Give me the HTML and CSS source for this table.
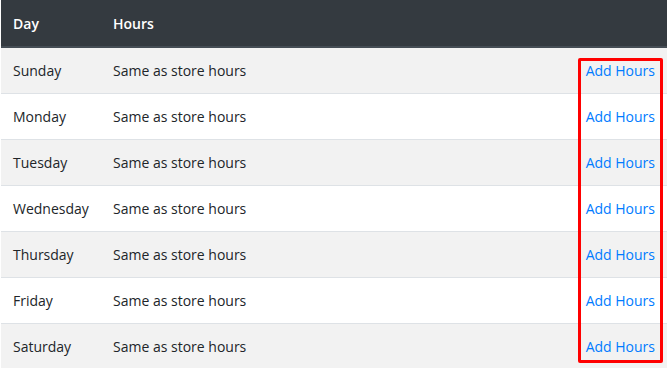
FILE: index.html
```html
<!DOCTYPE html>
<html>
<head>
<meta charset="utf-8">
<link rel="stylesheet" href="styles.css">
</head>
<body>
<div class="wrap">
<table class="hours">
  <thead>
    <tr><th class="c-day">Day</th><th class="c-hours">Hours</th><th class="c-act"></th></tr>
  </thead>
  <tbody>
    <tr><td>Sunday</td><td>Same as store hours</td><td class="act"><a href="#">Add Hours</a></td></tr>
    <tr><td>Monday</td><td>Same as store hours</td><td class="act"><a href="#">Add Hours</a></td></tr>
    <tr><td>Tuesday</td><td>Same as store hours</td><td class="act"><a href="#">Add Hours</a></td></tr>
    <tr><td>Wednesday</td><td>Same as store hours</td><td class="act"><a href="#">Add Hours</a></td></tr>
    <tr><td>Thursday</td><td>Same as store hours</td><td class="act"><a href="#">Add Hours</a></td></tr>
    <tr><td>Friday</td><td>Same as store hours</td><td class="act"><a href="#">Add Hours</a></td></tr>
    <tr><td>Saturday</td><td>Same as store hours</td><td class="act"><a href="#">Add Hours</a></td></tr>
  </tbody>
</table>
<div class="highlight"></div>
</div>
</body>
</html>
```
FILE: styles.css
```css
html, body {
  margin: 0;
  padding: 0;
  background: #fff;
}
body {
  font-family: "Open Sans", "Liberation Sans", sans-serif;
  font-size: 14px;
  line-height: 21px;
  color: #212529;
  overflow: hidden;
}
.wrap {
  position: relative;
  width: 668px;
  height: 368px;
  overflow: hidden;
}
.hours {
  width: 666px;
  margin-left: 1px;
  border-collapse: collapse;
}
.hours th, .hours td {
  padding: 12px;
  text-align: left;
  vertical-align: top;
}
.hours thead th {
  background: #343a40;
  color: #fff;
  font-weight: 600;
  height: 21px;
  padding-top: 13px;
  padding-bottom: 12px;
  border-bottom: 2px solid #454d55;
}
.c-day { width: 76px; }
.hours td {
  border-top: 1px solid #dee2e6;
}
.hours tbody tr:first-child td {
  border-top: 0;
}
.hours tbody tr:nth-child(odd) {
  background: #f2f2f2;
}
.act {
  text-align: right !important;
  width: 70px;
}
.act a {
  color: #007bff;
  text-decoration: none;
}
.highlight {
  position: absolute;
  left: 578px;
  top: 58px;
  width: 79px;
  height: 299px;
  border: 3px solid #ff0000;
  border-radius: 2px;
}
```
